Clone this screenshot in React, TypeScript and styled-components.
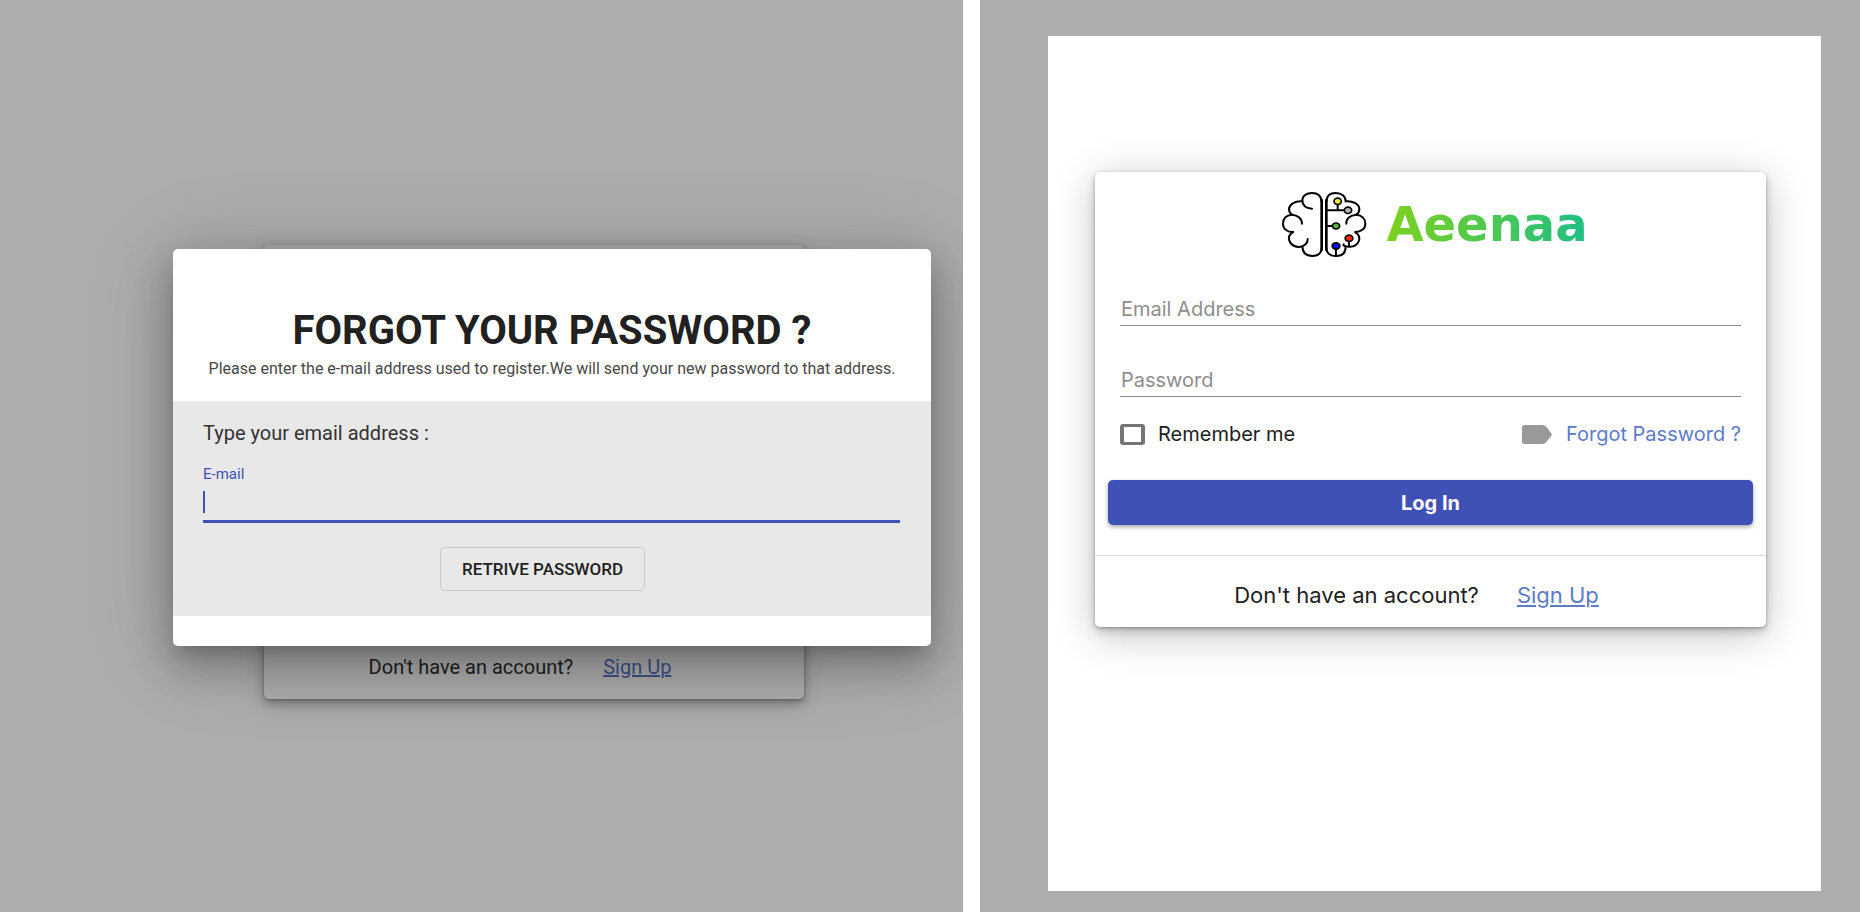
import React from "react";
import styled, { createGlobalStyle } from "styled-components";

const INDIGO = "#3f51b5";
const LINK = "#5c7bc9";
const SHADE = "#adadad";

const GlobalStyle = createGlobalStyle`
  *, *::before, *::after { box-sizing: border-box; }
  body { margin: 0; background: #fff; color: #212121; font-family: Roboto, "Liberation Sans", sans-serif; }
  button, input { font-family: inherit; }
`;

const Page = styled.main`
  display: grid;
  grid-template-columns: 963fr 880fr;
  gap: 17px;
  min-height: 100vh;
`;

const Pane = styled.section`
  position: relative;
  display: flex;
  overflow: hidden;
  background: ${SHADE};
`;

const DimmedPane = styled(Pane)`
  align-items: center;
  padding: 32px 159px 0 264px;
`;

const LoginPane = styled(Pane)`
  padding: 36px 39px 21px 68px;
  font-family: Inter, Roboto, sans-serif;
`;

const Sheet = styled.div`
  flex: 1;
  padding: 136px 55px 48px 47px;
  background: #fff;
`;

const Card = styled.div<{ $dimmed?: boolean }>`
  width: 100%;
  border-radius: 5px;
  background: ${(p) => (p.$dimmed ? SHADE : "#fff")};
  box-shadow: ${(p) =>
    p.$dimmed
      ? "0 4px 8px 0 rgba(0, 0, 0, 0.2), 0 6px 20px 0 rgba(0, 0, 0, 0.19)"
      : "0 4px 8px 0 rgba(0, 0, 0, 0.2), 0 8px 40px 0 rgba(0, 0, 0, 0.24)"},
    0 1px 3px 0 rgba(0, 0, 0, 0.25);
`;

const HiddenBody = styled.div`
  height: 382px;
`;

const SignUpBar = styled.footer<{ $large?: boolean }>`
  display: flex;
  align-items: center;
  justify-content: center;
  gap: ${(p) => (p.$large ? 38 : 30)}px;
  height: 72px;
  padding: ${(p) => (p.$large ? 6 : 8)}px 28px 0 0;
  border-top: ${(p) => (p.$large ? "1px solid #dcdcdc" : "0")};
  font-size: ${(p) => (p.$large ? 22 : 20)}px;
  line-height: 28px;
`;

const SignUpLink = styled.a<{ $dimmed?: boolean }>`
  color: ${(p) => (p.$dimmed ? "#3d5089" : LINK)};
  text-decoration: underline;
`;

const Overlay = styled.div`
  position: absolute;
  inset: 0;
  display: flex;
  align-items: center;
  padding: 0 32px 17px 173px;
`;

const Dialog = styled.div`
  width: 100%;
  padding-bottom: 30px;
  border-radius: 5px;
  background: #fff;
  box-shadow: 0 11px 15px -7px rgba(0, 0, 0, 0.2), 0 24px 38px 3px rgba(0, 0, 0, 0.14),
    0 9px 46px 8px rgba(0, 0, 0, 0.12), 0 8px 90px 4px rgba(0, 0, 0, 0.12);
`;

const DialogHeader = styled.header`
  padding: 56px 30px 20px;
  text-align: center;
`;

const DialogTitle = styled.h1`
  margin: 0;
  font-size: 40px;
  font-weight: 700;
  line-height: 52px;
`;

const DialogHint = styled.p`
  margin: 0;
  color: #484848;
  font-size: 16px;
  line-height: 24px;
`;

const DialogForm = styled.form`
  display: flex;
  flex-direction: column;
  padding: 18px 31px 25px 30px;
  background: #e8e8e8;
`;

const Prompt = styled.p`
  margin: 0 0 17px;
  color: #333;
  font-size: 20px;
  line-height: 28px;
`;

const EmailLabel = styled.label`
  color: ${INDIGO};
  font-size: 15px;
  line-height: 20px;
`;

const EmailInput = styled.input`
  height: 39px;
  padding: 0;
  border: 0;
  border-bottom: 3px solid ${INDIGO};
  border-radius: 0;
  outline: 0;
  background: linear-gradient(${INDIGO}, ${INDIGO}) 0 7px / 2px 22px no-repeat;
  font-size: 20px;
`;

const ButtonRow = styled.div`
  display: flex;
  justify-content: center;
  padding: 24px 18px 0 0;
`;

const OutlinedButton = styled.button`
  height: 44px;
  padding: 0 21px;
  border: 1px solid #c9c9c9;
  border-radius: 5px;
  background: transparent;
  color: #212121;
  font-size: 17px;
  font-weight: 500;
`;

const Brand = styled.div`
  display: flex;
  align-items: center;
  justify-content: center;
  gap: 19px;
  height: 104px;
  padding-left: 8px;
`;

const BrandName = styled.span`
  background: linear-gradient(100deg, #7bd11f 5%, #22bf83 95%);
  background-clip: text;
  color: transparent;
  font-family: "DejaVu Sans", sans-serif;
  font-size: 48px;
  font-weight: 700;
  line-height: 60px;
`;

const LoginForm = styled.form`
  display: flex;
  flex-direction: column;
  padding: 0 13px 30px;
`;

const Fields = styled.div`
  display: flex;
  flex-direction: column;
  gap: 35px;
  padding: 14px 12px 0;
`;

const TextInput = styled.input`
  width: 100%;
  height: 36px;
  padding: 2px 1px 0;
  border: 0;
  border-bottom: 1px solid #8c8c8c;
  border-radius: 0;
  outline: 0;
  background: transparent;
  font-size: 20px;
  &::placeholder { color: #8e8e8e; opacity: 1; }
`;

const Options = styled.div`
  display: flex;
  align-items: center;
  justify-content: space-between;
  height: 28px;
  margin: 23px 12px 32px;
  font-size: 20px;
  line-height: 28px;
`;

const Remember = styled.label`
  display: flex;
  align-items: center;
  gap: 13px;
`;

const Checkbox = styled.input`
  appearance: none;
  width: 25px;
  height: 21px;
  margin: 0;
  border: solid #757575;
  border-width: 3px 4px;
  border-radius: 3px;
  background: #fff;
  &:checked { background: ${INDIGO}; }
`;

const ForgotLink = styled.a`
  display: flex;
  align-items: center;
  gap: 14px;
  color: ${LINK};
  text-decoration: none;
`;

const LoginButton = styled.button`
  height: 45px;
  border: 0;
  border-radius: 5px;
  background: ${INDIGO};
  box-shadow: 0 2px 4px rgba(0, 0, 0, 0.35);
  color: #fff;
  font-size: 20px;
  font-weight: 700;
`;

function BrainLogo() {
  return (
    <svg width="86" height="67" viewBox="33 33 258 201" aria-hidden="true">
      <g fill="none" stroke="#000" strokeWidth="6" strokeLinecap="round">
        <path d="M155 64C153 46 142 39 126 39C109 39 97 48 97 61C97 76 108 85 126 86" />
        <path d="M97 64C74 62 57 74 57 87C57 94 60 100 66 104C84 105 96 116 96 131" />
        <path d="M66 104C48 105 39 117 39 131C39 146 51 156 70 156" />
        <path d="M68 157C58 163 55 173 58 182C63 197 80 204 97 199C107 195 113 188 113 177" />
        <path d="M97 200C98 218 109 228 127 228C144 228 155 219 155 205" />
        <path d="M169 64C170 47 180 39 197 39C215 39 227 49 227 64C249 62 268 73 268 87C268 95 265 100 259 104" />
        <path d="M259 104C240 105 228 116 229 131" />
        <path d="M259 104C276 106 286 117 286 131C286 147 273 156 256 156" />
        <path d="M256 157C267 163 270 173 266 184C261 195 249 201 237 200C224 199 218 197 221 193" />
        <path d="M227 200C227 218 216 228 198 228C181 228 169 219 169 205" />
        <path d="M172 91H225M203 73V91M172 138H190M237 184V199M198 206V228" />
      </g>
      <path d="M155 58V212M169 58V212" stroke="#000" strokeWidth="8" />
      <g stroke="#000" strokeWidth="5">
        <ellipse cx="203" cy="64" rx="11" ry="9.5" fill="#f0ec2c" />
        <ellipse cx="234" cy="91" rx="11" ry="9.5" fill="#b5b5b5" />
        <ellipse cx="198" cy="138" rx="11" ry="9" fill="#5bb031" />
        <ellipse cx="237" cy="175" rx="11.5" ry="9.5" fill="#ff2a00" />
        <ellipse cx="198" cy="198" rx="11.5" ry="9.5" fill="#0000f5" />
      </g>
    </svg>
  );
}

function TagIcon() {
  return (
    <svg width="30" height="19" viewBox="0 0 30 19" aria-hidden="true">
      <path d="M3 0H20Q23 0 24.500 2L30 9.500L24.500 17Q23 19 20 19H3Q0 19 0 16.500V2.500Q0 0 3 0Z" fill="#999" />
    </svg>
  );
}

export default function App() {
  return (
    <>
      <GlobalStyle />
      <Page>
        <DimmedPane>
          <Card $dimmed>
            <HiddenBody />
            <SignUpBar>
              <span>Don't have an account?</span>
              <SignUpLink $dimmed href="#signup">Sign Up</SignUpLink>
            </SignUpBar>
          </Card>
          <Overlay>
            <Dialog role="dialog" aria-labelledby="forgot-title">
              <DialogHeader>
                <DialogTitle id="forgot-title">FORGOT YOUR PASSWORD ?</DialogTitle>
                <DialogHint>
                  Please enter the e-mail address used to register.We will send your new password to that address.
                </DialogHint>
              </DialogHeader>
              <DialogForm>
                <Prompt>Type your email address :</Prompt>
                <EmailLabel htmlFor="retrieve-email">E-mail</EmailLabel>
                <EmailInput id="retrieve-email" type="email" />
                <ButtonRow>
                  <OutlinedButton type="button">RETRIVE PASSWORD</OutlinedButton>
                </ButtonRow>
              </DialogForm>
            </Dialog>
          </Overlay>
        </DimmedPane>
        <LoginPane>
          <Sheet>
            <Card>
              <Brand>
                <BrainLogo />
                <BrandName>Aeenaa</BrandName>
              </Brand>
              <LoginForm>
                <Fields>
                  <TextInput type="email" placeholder="Email Address" aria-label="Email Address" />
                  <TextInput type="password" placeholder="Password" aria-label="Password" />
                </Fields>
                <Options>
                  <Remember>
                    <Checkbox type="checkbox" />
                    Remember me
                  </Remember>
                  <ForgotLink href="#forgot">
                    <TagIcon />
                    Forgot Password ?
                  </ForgotLink>
                </Options>
                <LoginButton type="button">Log In</LoginButton>
              </LoginForm>
              <SignUpBar $large>
                <span>Don't have an account?</span>
                <SignUpLink href="#signup">Sign Up</SignUpLink>
              </SignUpBar>
            </Card>
          </Sheet>
        </LoginPane>
      </Page>
    </>
  );
}
